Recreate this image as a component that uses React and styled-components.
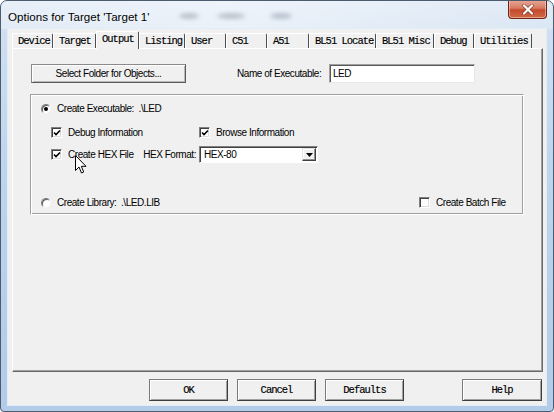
import React from 'react';
import styled, { createGlobalStyle } from 'styled-components';

const SANS = `"Liberation Sans", Arial, sans-serif`;
const MONO = `"Liberation Mono", "Courier New", monospace`;

const GlobalStyle = createGlobalStyle`
  html, body {
    margin: 0;
    padding: 0;
    background: #ffffff;
  }
  body {
    width: 554px;
    height: 412px;
    overflow: hidden;
    font-family: ${SANS};
  }
`;

const TABS = [
  { label: 'Device', w: 41 },
  { label: 'Target', w: 43 },
  { label: 'Output', w: 43, active: true },
  { label: 'Listing', w: 46 },
  { label: 'User', w: 41 },
  { label: 'C51', w: 41 },
  { label: 'A51', w: 42 },
  { label: 'BL51 Locate', w: 67 },
  { label: 'BL51 Misc', w: 58 },
  { label: 'Debug', w: 40 },
  { label: 'Utilities', w: 58 },
];

const CheckMark = () => (
  <svg width="8" height="8" viewBox="0 0 8 8">
    <path d="M1 3.5 L3 5.5 L7 1.5" fill="none" stroke="#000" strokeWidth="1.6" />
  </svg>
);

const Check = ({ checked }) => <CheckBox>{checked && <CheckMark />}</CheckBox>;
const Radio = ({ checked }) => <RadioCircle>{checked && <RadioDot />}</RadioCircle>;

const App = () => (
  <>
    <GlobalStyle />
    <Window>
      <TitleBar>
        <Title>Options for Target 'Target 1'</Title>
        <GlassBlur width="140" height="24" viewBox="0 0 140 24">
          <defs>
            <filter id="bl" x="-50%" y="-50%" width="200%" height="200%">
              <feGaussianBlur stdDeviation="2.2" />
            </filter>
          </defs>
          <g filter="url(#bl)" fill="#7f8c99" opacity="0.45">
            <ellipse cx="18" cy="12" rx="10" ry="3" />
            <ellipse cx="60" cy="12" rx="14" ry="3" />
            <ellipse cx="110" cy="12" rx="11" ry="3" />
          </g>
        </GlassBlur>
        <CloseButton>
          <svg width="14" height="11" viewBox="0 0 14 11">
            <path d="M3 1.5 L11 9.5 M11 1.5 L3 9.5" stroke="#5a1a10" strokeWidth="3.6" strokeLinecap="round" opacity="0.6" />
            <path d="M3 1.5 L11 9.5 M11 1.5 L3 9.5" stroke="#ffffff" strokeWidth="2.2" strokeLinecap="round" />
          </svg>
        </CloseButton>
      </TitleBar>

      <Client>
        <TabStrip>
          {TABS.map((t) => (
            <Tab key={t.label} $w={t.w} $active={t.active}>
              {t.label}
            </Tab>
          ))}
        </TabStrip>

        <Panel>
          <TopRow>
            <PushButton $w={155}>Select Folder for Objects...</PushButton>
            <FieldLabel>Name of Executable:</FieldLabel>
            <TextField>LED</TextField>
          </TopRow>

          <GroupBox>
            <OptionRow $mt={0}>
              <OptionItem>
                <Radio checked />
                <span>Create Executable:  .\LED</span>
              </OptionItem>
            </OptionRow>

            <OptionRow $mt={11} $indent={10}>
              <OptionItem $w={148}>
                <Check checked />
                <span>Debug Information</span>
              </OptionItem>
              <OptionItem>
                <Check checked />
                <span>Browse Information</span>
              </OptionItem>
            </OptionRow>

            <OptionRow $mt={7} $indent={10} $h={17}>
              <OptionItem $w={92}>
                <Check checked />
                <span>Create HEX File</span>
              </OptionItem>
              <ComboLabel>HEX Format:</ComboLabel>
              <Combo>
                <ComboText>HEX-80</ComboText>
                <ComboArrow>
                  <svg width="7" height="4" viewBox="0 0 7 4">
                    <path d="M0 0 H7 L3.5 4 Z" fill="#000" />
                  </svg>
                </ComboArrow>
              </Combo>
            </OptionRow>

            <OptionRow $mt={33}>
              <OptionItem $w={378}>
                <Radio />
                <span>Create Library:  .\LED.LIB</span>
              </OptionItem>
              <OptionItem>
                <Check />
                <span>Create Batch File</span>
              </OptionItem>
            </OptionRow>
          </GroupBox>
        </Panel>

        <ButtonRow>
          <DialogButton>OK</DialogButton>
          <DialogButton>Cancel</DialogButton>
          <DialogButton>Defaults</DialogButton>
          <DialogButton $push>Help</DialogButton>
        </ButtonRow>
      </Client>

      <Cursor width="12" height="19" viewBox="0 0 12 19">
        <path d="M0.5 0.5 V15.5 L4 12 L6.5 18 L8.7 17 L6.3 11.3 H11 Z" fill="#fff" stroke="#000" strokeWidth="1" strokeLinejoin="round" />
      </Cursor>
    </Window>
  </>
);

const Window = styled.div`
  position: relative;
  box-sizing: border-box;
  width: 554px;
  height: 412px;
  display: flex;
  flex-direction: column;
  border: 1px solid #4b5b70;
  border-radius: 7px 7px 4px 4px;
  overflow: hidden;
  background: linear-gradient(180deg, #dae6f4 0%, #cfdff1 8%, #bfd5ed 40%, #b2cbe8 100%);
`;

const TitleBar = styled.div`
  height: 28px;
  flex: 0 0 28px;
  display: flex;
  align-items: center;
  padding-left: 7px;
  background: linear-gradient(90deg, rgba(255, 255, 255, 0.35) 0%, rgba(255, 255, 255, 0.55) 40%, rgba(255, 255, 255, 0.2) 100%);
`;

const Title = styled.span`
  font-family: ${SANS};
  font-size: 11.6px;
  color: #000;
  margin-top: 2px;
  text-shadow: 0 0 6px rgba(255, 255, 255, 0.9);
`;

const GlassBlur = styled.svg`
  margin-left: 22px;
  margin-top: 2px;
`;

const CloseButton = styled.div`
  align-self: flex-start;
  margin-left: auto;
  margin-right: 6px;
  margin-top: -1px;
  width: 39px;
  height: 19px;
  box-sizing: border-box;
  display: flex;
  align-items: center;
  justify-content: center;
  border: 1px solid #6e2418;
  border-top: none;
  border-radius: 0 0 4px 4px;
  background: linear-gradient(180deg, #e9a996 0%, #d77a63 45%, #c44a2f 55%, #cf6a45 100%);
  box-shadow: inset 0 0 0 1px rgba(255, 220, 200, 0.5);
`;

const Client = styled.div`
  flex: 1;
  margin: 0 7px 6px 7px;
  padding: 2px 3px 4px 4px;
  display: flex;
  flex-direction: column;
  background: #f0f0f0;
  box-shadow: 0 0 0 1px #e4ecf6;
`;

const TabStrip = styled.div`
  position: relative;
  z-index: 1;
  height: 17px;
  display: flex;
  align-items: flex-end;
`;

const Tab = styled.div`
  box-sizing: border-box;
  width: ${(p) => p.$w}px;
  height: ${(p) => (p.$active ? 18 : 15)}px;
  margin-bottom: ${(p) => (p.$active ? -1 : 0)}px;
  padding: ${(p) => (p.$active ? '1px 0 0 5px' : '1px 0 0 5px')};
  border-top: 1px solid #ffffff;
  border-left: 1px solid #ffffff;
  border-right: 1px solid #4e4e4e;
  border-top-right-radius: 2px;
  background: #f0f0f0;
  font-family: ${MONO};
  font-size: 10.5px;
  letter-spacing: -1px;
  line-height: 12px;
  color: #000;
  -webkit-text-stroke: 0.15px #000;
  white-space: nowrap;
`;

const Panel = styled.div`
  box-sizing: border-box;
  height: 324px;
  padding: 15px 0 0 17px;
  border-top: 1px solid #ffffff;
  border-left: 1px solid #ffffff;
  border-right: 1px solid #696969;
  border-bottom: 1px solid #696969;
  box-shadow: inset -1px -1px 0 #a0a0a0;
`;

const TopRow = styled.div`
  display: flex;
  align-items: center;
  height: 19px;
`;

const PushButton = styled.div`
  box-sizing: border-box;
  width: ${(p) => p.$w}px;
  height: 19px;
  margin-left: 1px;
  display: flex;
  align-items: center;
  justify-content: center;
  border: 1px solid #8a8a8a;
  border-right-color: #5a5a5a;
  border-bottom-color: #5a5a5a;
  box-shadow: inset 1px 1px 0 #ffffff, inset -1px -1px 0 #b8b8b8;
  background: #f0f0f0;
  font-family: ${SANS};
  font-size: 10px;
  letter-spacing: -0.45px;
  color: #000;
`;

const FieldLabel = styled.span`
  margin-left: 51px;
  font-size: 10px;
  letter-spacing: -0.45px;
  color: #000;
  white-space: nowrap;
`;

const TextField = styled.div`
  box-sizing: border-box;
  width: 146px;
  height: 19px;
  margin-left: auto;
  margin-right: 67px;
  padding: 1px 0 0 3px;
  border: 1px solid #a0a0a0;
  border-right-color: #e8e8e8;
  border-bottom-color: #e8e8e8;
  box-shadow: inset 1px 1px 0 #5a5a5a;
  background: #ffffff;
  font-size: 10px;
  letter-spacing: -0.45px;
  line-height: 15px;
  color: #000;
`;

const GroupBox = styled.div`
  box-sizing: border-box;
  width: 494px;
  height: 121px;
  margin-top: 11px;
  padding: 7px 0 0 10px;
  border: 1px solid #a0a0a0;
  border-right-color: #ffffff;
  border-bottom-color: #ffffff;
  box-shadow: inset 1px 1px 0 #ffffff, inset -1px -1px 0 #a0a0a0;
  display: flex;
  flex-direction: column;
`;

const OptionRow = styled.div`
  display: flex;
  align-items: center;
  height: ${(p) => p.$h || 13}px;
  margin-top: ${(p) => p.$mt}px;
  padding-left: ${(p) => p.$indent || 0}px;
`;

const OptionItem = styled.div`
  display: flex;
  align-items: center;
  gap: 6px;
  width: ${(p) => (p.$w ? `${p.$w}px` : 'auto')};
  flex: none;
  font-size: 10px;
  letter-spacing: -0.45px;
  color: #000;
  white-space: pre;
`;

const CheckBox = styled.div`
  box-sizing: border-box;
  width: 11px;
  height: 11px;
  display: flex;
  align-items: center;
  justify-content: center;
  border: 1px solid #808080;
  border-right-color: #ffffff;
  border-bottom-color: #ffffff;
  box-shadow: inset 1px 1px 0 #404040, inset -1px -1px 0 #dcdcdc;
  background: #ffffff;
`;

const RadioCircle = styled.div`
  box-sizing: border-box;
  width: 10px;
  height: 10px;
  display: flex;
  align-items: center;
  justify-content: center;
  border-radius: 50%;
  border: 1px solid #808080;
  border-right-color: #f4f4f4;
  border-bottom-color: #f4f4f4;
  box-shadow: inset 1px 1px 0 #5a5a5a;
  background: #ffffff;
`;

const RadioDot = styled.div`
  width: 4px;
  height: 4px;
  border-radius: 50%;
  background: #000;
`;

const ComboLabel = styled.span`
  width: 53px;
  margin-right: 3px;
  text-align: right;
  font-size: 10px;
  letter-spacing: -0.45px;
  color: #000;
  white-space: nowrap;
`;

const Combo = styled.div`
  box-sizing: border-box;
  width: 119px;
  height: 17px;
  display: flex;
  align-items: stretch;
  padding: 1px;
  border: 1px solid #808080;
  border-right-color: #ffffff;
  border-bottom-color: #ffffff;
  box-shadow: inset 1px 1px 0 #404040;
  background: #ffffff;
`;

const ComboText = styled.span`
  flex: 1;
  padding-left: 3px;
  font-size: 10px;
  letter-spacing: -0.45px;
  line-height: 13px;
  color: #000;
`;

const ComboArrow = styled.div`
  box-sizing: border-box;
  width: 14px;
  display: flex;
  align-items: center;
  justify-content: center;
  border: 1px solid #e4e4e4;
  border-right-color: #404040;
  border-bottom-color: #404040;
  box-shadow: inset -1px -1px 0 #909090, inset 1px 1px 0 #ffffff;
  background: #f0f0f0;
`;

const ButtonRow = styled.div`
  display: flex;
  gap: 9px;
  height: 22px;
  margin-top: 7px;
  padding-left: 137px;
  padding-right: 1px;
`;

const DialogButton = styled.div`
  box-sizing: border-box;
  width: ${(p) => (p.$push ? 80 : 79)}px;
  height: 22px;
  margin-left: ${(p) => (p.$push ? 'auto' : '0')};
  display: flex;
  align-items: center;
  justify-content: center;
  border: 1px solid #7a7a7a;
  border-right-color: #3f3f3f;
  border-bottom-color: #3f3f3f;
  box-shadow: inset 1px 1px 0 #ffffff, inset -1px -1px 0 #a0a0a0;
  background: #f0f0f0;
  font-family: ${MONO};
  font-size: 10.5px;
  letter-spacing: -1px;
  -webkit-text-stroke: 0.15px #000;
  color: #000;
`;

const Cursor = styled.svg`
  position: absolute;
  left: 74px;
  top: 154px;
`;

export default App;
